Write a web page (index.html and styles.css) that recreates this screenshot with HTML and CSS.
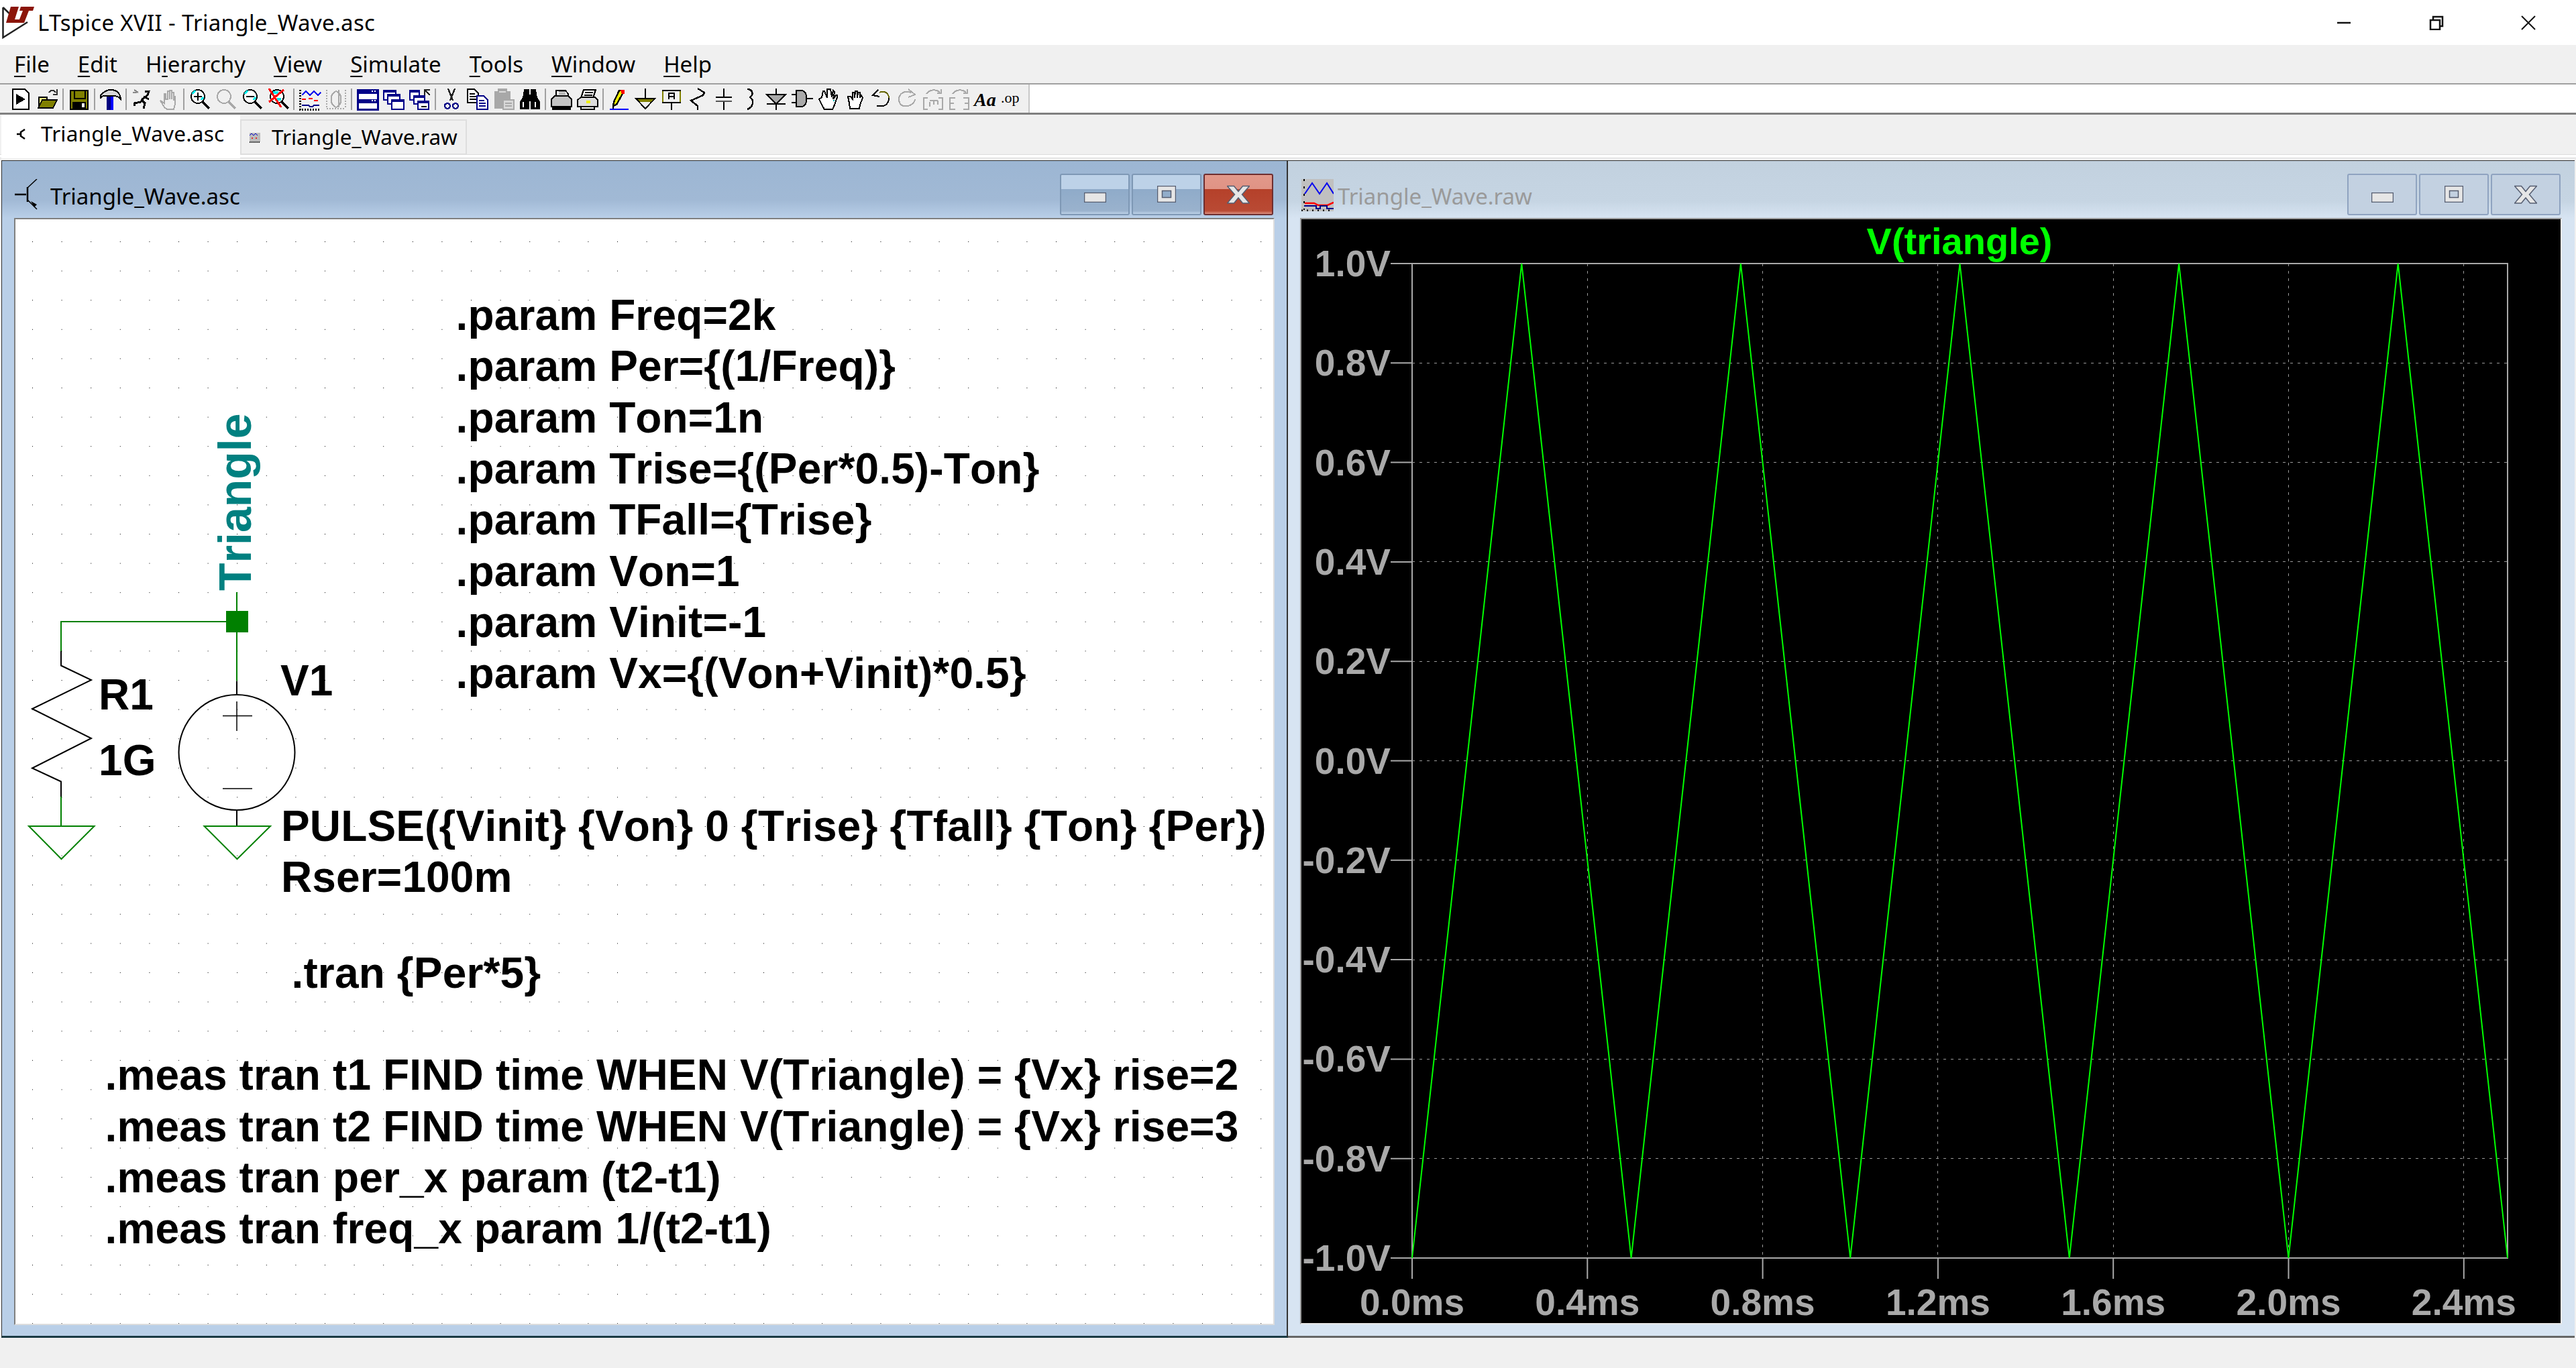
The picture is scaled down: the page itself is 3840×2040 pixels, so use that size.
FILE: index.html
```html
<!DOCTYPE html>
<html lang="en">
<head>
<meta charset="utf-8">
<title>LTspice XVII - Triangle_Wave.asc</title>
<link rel="stylesheet" href="styles.css">
</head>
<body>
<div class="app">
  <header class="titlebar">
    <svg class="logo" viewBox="0 0 48 50" width="48" height="50"><path class="logo-edge" d="M1.500 2V47L38 24M1.500 2L16 16"/><path class="logo-mark" d="M13 1h12l-6 19h10l-2 5H6zM28 1h20l-2 6h-6l-7 18h-9l7-18h-5z"/></svg>
    <span class="app-title">LTspice XVII - Triangle_Wave.asc</span>
    <div class="caption">
      <span class="cap-btn"><svg width="22" height="22" viewBox="0 0 22 22"><path d="M1 11h20" class="cap-ico"/></svg></span>
      <span class="cap-btn"><svg width="22" height="22" viewBox="0 0 22 22"><path d="M2 7h14v14H2zM6 7V2h14v14h-4" class="cap-ico"/></svg></span>
      <span class="cap-btn"><svg width="22" height="22" viewBox="0 0 22 22"><path d="M1 1l20 20M21 1L1 21" class="cap-ico thin"/></svg></span>
    </div>
  </header>

  <nav class="menubar">
    <span><u>F</u>ile</span><span><u>E</u>dit</span><span>H<u>i</u>erarchy</span><span><u>V</u>iew</span><span><u>S</u>imulate</span><span><u>T</u>ools</span><span><u>W</u>indow</span><span><u>H</u>elp</span>
  </nav>

  <div class="toolrow">
    <div class="toolbar">
      <i class="tb"><svg class="ic" viewBox="0 0 16 16"><path d="M1.500.5h9l3 3v12h-12z" fill="#fff"/><path d="M4 4l7 4-7 4z" fill="#000" stroke="none"/></svg></i>
      <i class="tb"><svg class="ic" viewBox="0 0 16 16"><path d="M1.500 14V6.500h6v2H5" fill="#ffff80"/><path d="M1 14.500l3-6h11l-3 6z" fill="#808000"/><path d="M9 3c1-2 4-2 5 0M15 .5v4h-3" stroke="#333"/></svg></i>
      <i class="sep"></i>
      <i class="tb"><svg class="ic" viewBox="0 0 16 16"><path d="M1.500 1.500h13v14h-13z" fill="#808000"/><path d="M4.500 1.500h8v6h-8z" fill="#808000"/><path d="M3 10h10v6H3z" fill="#000" stroke="none"/><path d="M10 11h2v3h-2z" fill="#fff" stroke="none"/></svg></i>
      <i class="sep"></i>
      <i class="tb"><svg class="ic" viewBox="0 0 16 16"><path d="M.5 7.500V5C3 2 5 1 8 1c4 0 7 2 7.500 7-1.500-2-3.500-2.500-5.500-2.500H3C2 5.500 1 6 .5 7.500z" fill="#d8d8d8"/><path d="M5 6h3v10H5z" fill="#000080" stroke="none"/><path d="M8 6h2v10H8z" fill="#00f" stroke="none"/></svg></i>
      <i class="sep"></i>
      <i class="tb"><svg class="ic" viewBox="0 0 16 16"><path d="M2 1l3 2M1 3h3" stroke="#888"/><path d="M10 2h3l-1 3-4 3-1 2-5 1v2M9 6l4 2M8 9l2 2-1 4" stroke-width="1.500"/></svg></i>
      <i class="tb"><svg class="ic mute" viewBox="0 0 16 16"><path d="M2 9l3 5 2 1.500h5l1-4V6h-1v3V3h-1.500v5V1.500H9V8V2H7.500v6H6V4H5v7z"/></svg></i>
      <i class="sep"></i>
      <i class="tb"><svg class="ic" viewBox="0 0 16 16"><circle cx="6.500" cy="6" r="5" fill="#fff"/><path d="M2.500 4l2-2.500M9 8.500l1.500-2" stroke="#0ee" stroke-width="1.500"/><path d="M3.500 6h6M6.500 3v6"/><path d="M10 10l5 5" stroke-width="2"/></svg></i>
      <i class="tb"><svg class="ic mute" viewBox="0 0 16 16"><circle cx="6.500" cy="6" r="5"/><path d="M10 10l5 5" stroke-width="2"/></svg></i>
      <i class="tb"><svg class="ic" viewBox="0 0 16 16"><circle cx="6.500" cy="6" r="5" fill="#fff"/><path d="M2.500 4l2-2.500M9 8.500l1.500-2" stroke="#0ee" stroke-width="1.500"/><path d="M3.500 6h6"/><path d="M10 10l5 5" stroke-width="2"/></svg></i>
      <i class="tb"><svg class="ic" viewBox="0 0 16 16"><circle cx="7" cy="6" r="5" fill="#fff"/><path d="M4 3l4 0M7 8l3 0" stroke="#0ee" stroke-width="2"/><path d="M10.500 10l5 5" stroke-width="2"/><path d="M1 0l9 14M12 1L1 10" stroke="#f00" stroke-width="1.500"/></svg></i>
      <i class="sep"></i>
      <i class="tb"><svg class="ic" viewBox="0 0 16 16"><path d="M.5 1v15M0 15.500h16" stroke-dasharray="1 1" stroke-width="1.500"/><path d="M2 5l3-3 3 3 3-3 3 3 2-2" stroke="#00e"/><path d="M2 8h3M7 7.500h3M11 9h3" stroke="#f00"/><path d="M2 12.500h5l1 1h2l1-1h4" stroke="#008" stroke-width="1.200"/></svg></i>
      <i class="tb"><svg class="ic mute" viewBox="0 0 16 16"><path d="M1 1v14h14M15 1v14" stroke-dasharray="1 1"/><path d="M8 2c-5 2-5 10 0 12M8 2c5 2 5 10 0 12M10 1v13"/></svg></i>
      <i class="sep"></i>
      <i class="tb"><svg class="ic navy" viewBox="0 0 16 16"><path d="M.5 1h15v14.500H.5z" fill="#fff" stroke-width="1.500"/><path d="M1 1h14v3H1zM1 8h14v3H1z" fill="#008" stroke="none"/><path d="M11 2h1M13 2h1M11 9h1M13 9h1" stroke="#fff"/></svg></i>
      <i class="tb"><svg class="ic navy" viewBox="0 0 16 16"><path d="M.5 1.500h9v7h-9z" fill="#fff"/><path d="M1 1h8v2H1z" fill="#008" stroke="none"/><path d="M3.500 4.500h9v7h-9z" fill="#fff"/><path d="M4 4h8v2H4z" fill="#008" stroke="none"/><path d="M6.500 8.500h9v7h-9z" fill="#fff"/><path d="M7 8h8v2H7z" fill="#008" stroke="none"/></svg></i>
      <i class="tb"><svg class="ic navy" viewBox="0 0 16 16"><path d="M.5 1.500h7v7h-7z" fill="#fff"/><path d="M1 1h6v2H1z" fill="#008" stroke="none"/><path d="M3.500 5.500h8v6h-8z" fill="#fff"/><path d="M4 5h7v2H4z" fill="#008" stroke="none"/><path d="M6.500 9.500h8v6h-8z" fill="#fff"/><path d="M7 9h7v2H7z" fill="#008" stroke="none"/><path d="M9 13.500h4" stroke="#000"/><path d="M11.500 5V1h4M11.500 1l4 4" stroke="#222"/></svg></i>
      <i class="sep"></i>
      <i class="tb"><svg class="ic" viewBox="0 0 16 16"><path d="M5.500 0l3.500 9M10.500 0L7 9" stroke="#222" stroke-width="1.200"/><circle cx="5" cy="13" r="2" stroke="#008" stroke-width="1.200"/><circle cx="11" cy="13" r="2" stroke="#008" stroke-width="1.200"/></svg></i>
      <i class="tb"><svg class="ic" viewBox="0 0 16 16"><path d="M.5.5h5l3 3v7H.5z" fill="#fff"/><path d="M2 4h4M2 6h5M2 8h5"/><path d="M7.500 5.500h5l3 3v7h-8z" fill="#fff" stroke="#008"/><path d="M9 9h4M9 11h5M9 13h5" stroke="#008"/></svg></i>
      <i class="tb"><svg class="ic mute" viewBox="0 0 16 16"><path d="M1 2h12v13H1z" fill="#a8a8a8" stroke="none"/><path d="M4 .5h6v3H4z" fill="#a8a8a8" stroke="#a8a8a8"/><path d="M4.500 2.500h5" stroke="#ddd"/><path d="M7.500 8.500h8v7h-8z" fill="#d8d8d8"/><path d="M9 11h5M9 13h5"/></svg></i>
      <i class="tb"><svg class="ic" viewBox="0 0 16 16"><path d="M4 1h3v4H9V1h3l1 6 2 3v5h-6V9H7v6H1v-5l2-3z" fill="#000"/><path d="M3 10v4M12 10v4" stroke="#fff"/></svg></i>
      <i class="sep"></i>
      <i class="tb"><svg class="ic" viewBox="0 0 16 16"><path d="M4 6V1.500h7l2 2.500v2" fill="#fff"/><path d="M6 2.500h5M6 4h5" stroke="#999"/><path d="M.5 8L3 5.500h10L15.500 8v5.500H.5z" fill="#c4c4c4"/><path d="M1 15h14" stroke-width="2"/></svg></i>
      <i class="tb"><svg class="ic" viewBox="0 0 16 16"><path d="M5 1h9l-2 6H3z" fill="#fff"/><path d="M6 3h6M5.500 5h6"/><path d="M.5 8.500L3 6.500h10.500l2 2v5h-15z" fill="#ddd"/><path d="M7 10h3" stroke="#ee0" stroke-width="2"/><path d="M3 13.500h10v2H3z" fill="#fff"/></svg></i>
      <i class="sep"></i>
      <i class="tb"><svg class="ic" viewBox="0 0 16 16"><path d="M8 1.500h2l1 1.500-5 9-2.500 1 .5-3z" fill="#ee0" stroke-width="1.200"/><path d="M9 1h3v3h-2z" fill="#f00" stroke="none"/><path d="M3 14h1" stroke="#000" stroke-width="2"/><path d="M1 15.500h14" stroke="#00f" stroke-width="1.200"/></svg></i>
      <i class="tb"><svg class="ic" viewBox="0 0 16 16"><path d="M8 0v7"/><path d="M1 7.500h14L8 15z" fill="#f0f0f0"/><path d="M2 8h12l-2 2H4z" fill="#808000" stroke="none"/></svg></i>
      <i class="tb"><svg class="ic" viewBox="0 0 16 16"><path d="M1.500 1.500h13v9h-13z" fill="#f0f0f0"/><path d="M1.500 2v8M14.500 2v8" stroke="#808000"/><path d="M6 8V3.500h4V8M6 6h4"/><path d="M8 11v5"/></svg></i>
      <i class="tb"><svg class="ic" viewBox="0 0 16 16"><path d="M8 0l5 3-1 2-9 4 5 4v3" stroke-width="1.200"/></svg></i>
      <i class="tb"><svg class="ic" viewBox="0 0 16 16"><path d="M8 0v6M8 10v6"/><path d="M2 6.500h12"/><path d="M2 9.500h12" stroke="#555"/></svg></i>
      <i class="tb"><svg class="ic" viewBox="0 0 16 16"><path d="M6 .5c4 0 5 4 2 6 3 2 3 7-2 9" stroke-width="1.200"/></svg></i>
      <i class="tb"><svg class="ic" viewBox="0 0 16 16"><path d="M8 0v5M8 11v5M1 11.500h14"/><path d="M1 4.500h14L8 11.500z" fill="#aaa"/></svg></i>
      <i class="tb"><svg class="ic" viewBox="0 0 16 16"><path d="M3.500 1.500h4c5 0 5 12 0 12h-4z" fill="#aaa"/><path d="M0 4.500h3M0 10.500h3M11 7.500h5"/></svg></i>
      <i class="tb"><svg class="ic" viewBox="0 0 16 16"><path d="M3 6.500L1 8l3 6 1 1.500h6l1-2 2.500-7V5h-1l-2 3 1-5.500-1-1-1 5-1-6H7L7 7 5 2H4z" fill="#fff"/><path d="M12 8.500v1" stroke="#0aa"/></svg></i>
      <i class="tb"><svg class="ic" viewBox="0 0 16 16"><path d="M3 6l1 5 .5 4h7l.5-3 2-5-1-2-1 2V3h-1.500L10 7V2H8.500L8 7V3H6.500v5L5 6z" fill="#fff"/></svg></i>
      <i class="tb"><svg class="ic" viewBox="0 0 16 16"><path d="M7 3c4-2 7 1 7 4" stroke="#660"/><path d="M14 7c0 4-3 7-7 6M5 13h3"/><path d="M6 1L2 5l5 1"/></svg></i>
      <i class="tb"><svg class="ic mute" viewBox="0 0 16 16"><path d="M11 3C6 1 2 4 2 8s3 6 7 5c3-1 5-3 5-5"/><path d="M9 .5l5 4-5 2"/></svg></i>
      <i class="tb"><svg class="ic mute" viewBox="0 0 16 16"><path d="M4 7H1v8.500h3M12 7h3v8.500h-3" stroke-width="1.200"/><path d="M5.500 10v3.500M5.500 9h6M8.500 9v3M11.500 9v3"/><path d="M3 4C5 1 10 0 13 3M14 .5v3h-3"/></svg></i>
      <i class="tb"><svg class="ic mute" viewBox="0 0 16 16"><path d="M5 7H1v8.500h4M11 7h4v8.500h-4M1 11h3M12 11h3" stroke-width="1.200"/><path d="M3 4C5 1 10 0 13 3M14 .5v3h-3"/></svg></i>
      <i class="tb"><svg class="ic" viewBox="0 0 16 16"><text x="-.5" y="13" class="ic-aa">Aa</text></svg></i>
      <i class="tb"><svg class="ic" viewBox="0 0 16 16"><text x="0" y="10.500" class="ic-op">.op</text></svg></i>
    </div>
  </div>

  <div class="tabs">
    <div class="tab active">
      <svg class="tab-ico" viewBox="0 0 16 16" width="16" height="16"><path d="M1 8h6M7 4v8M7 5l6-4M7 11l6 4" class="sym"/></svg>
      <span>Triangle_Wave.asc</span>
    </div>
    <div class="tab">
      <svg class="tab-ico" viewBox="0 0 16 16" width="16" height="16"><path d="M0 1h16v14H0z" fill="#bbb"/><path d="M0 5l3-3 3 3 3-3 3 3" fill="none" stroke="#00c" stroke-width="1"/><path d="M3 9h2M9 9h2" stroke="#e00" stroke-width="1.500"/><path d="M0 15h16" stroke="#000" stroke-width="2" stroke-dasharray="1 1"/></svg>
      <span>Triangle_Wave.raw</span>
    </div>
  </div>

  <main class="mdi">
    <section class="win win-active">
      <div class="win-head">
        <svg class="win-ico" viewBox="0 0 34 46" width="34" height="46"><path d="M0 23h17M19 12v22" class="sym"/><path d="M19 13L33 0M19 31l14 14" class="sym thin"/><path d="M24 33l5 9 4-4z" fill="#000"/></svg>
        <span class="win-title">Triangle_Wave.asc</span>
        <div class="win-btns">
          <span class="wbtn"><svg class="g-min" viewBox="0 0 33 15" width="33" height="15"><rect x=".5" y=".5" width="32" height="14" class="glyph"/></svg></span>
          <span class="wbtn"><svg class="g-max" viewBox="0 0 28 25" width="28" height="25"><path d="M.5.500h27v24H.5zM7.500 7.500h13v10h-13z" class="glyph hole"/></svg></span>
          <span class="wbtn close"><svg class="g-x" viewBox="0 0 34 28" width="34" height="28"><path d="M.5 1.500h10l6.500 8 6.500-8h10l-11 12.500 11 13h-10l-6.500-8-6.500 8H.5l11-13z" class="glyph"/></svg></span>
        </div>
      </div>
      <div class="client sheet">
        <svg class="canvas" viewBox="21 325 1880 1651" width="1880" height="1651">
          <defs>
            <pattern id="dots" x="48" y="360" width="43.6" height="43.6" patternUnits="userSpaceOnUse"><rect x="0" y="0" width="1" height="1" fill="#000"/></pattern>
          </defs>
          <rect x="21" y="325" width="1880" height="1651" fill="url(#dots)"/>
          <path class="wire" d="M353 883V1015.500M91 971V927H353"/>
          <path class="part" d="M353 1015.500V1036M91 971V992.500L136 1014L48 1057L136 1101L48 1145.500L91 1165.500V1188M353 1208V1232"/>
          <path class="wire" d="M91 1188V1232M43 1232H140.500L91.500 1281ZM304.500 1232H403L353.500 1281Z"/>
          <rect class="junction" x="337" y="911" width="33" height="32"/>
          <ellipse class="part" cx="353" cy="1122" rx="86.500" ry="86"/>
          <path class="part thin-line" d="M332 1067.500H376M353 1046V1090M332 1176H376"/>
          <text class="sch" x="147" y="1058">R1</text>
          <text class="sch" x="147" y="1156">1G</text>
          <text class="sch" x="418" y="1037">V1</text>
          <text class="net" transform="translate(374 881) rotate(-90)">Triangle</text>
          <text class="sch" x="679.500" y="492">.param Freq=2k</text>
          <text class="sch" x="679.500" y="568.300">.param Per={(1/Freq)}</text>
          <text class="sch" x="679.500" y="644.700">.param Ton=1n</text>
          <text class="sch" x="679.500" y="721">.param Trise={(Per*0.5)-Ton}</text>
          <text class="sch" x="679.500" y="797.300">.param TFall={Trise}</text>
          <text class="sch" x="679.500" y="873.600">.param Von=1</text>
          <text class="sch" x="679.500" y="950">.param Vinit=-1</text>
          <text class="sch" x="679.500" y="1026.200">.param Vx={(Von+Vinit)*0.5}</text>
          <text class="sch" x="419" y="1254">PULSE({Vinit} {Von} 0 {Trise} {Tfall} {Ton} {Per})</text>
          <text class="sch" x="419" y="1330">Rser=100m</text>
          <text class="sch" x="434.500" y="1472.700">.tran {Per*5}</text>
          <text class="sch" x="156.500" y="1625">.meas tran t1 FIND time WHEN V(Triangle) = {Vx} rise=2</text>
          <text class="sch" x="156.500" y="1701.700">.meas tran t2 FIND time WHEN V(Triangle) = {Vx} rise=3</text>
          <text class="sch" x="156.500" y="1778">.meas tran per_x param (t2-t1)</text>
          <text class="sch" x="156.500" y="1854.300">.meas tran freq_x param 1/(t2-t1)</text>
        </svg>
      </div>
    </section>

    <section class="win win-idle">
      <div class="win-head">
        <svg class="win-ico plot-ico" viewBox="0 0 48 48" width="48" height="48"><path d="M0 0h48v48H0z" fill="#c0c0c0"/><path d="M5 22L16 6l11 16L38 6l10 16" fill="none" stroke="#00e" stroke-width="2"/><path d="M5 36h14l6 3h14l9-4" fill="none" stroke="#f00" stroke-width="2.500"/><path d="M4 0v46" stroke="#000" stroke-width="2" stroke-dasharray="3 8"/><path d="M0 47h48" stroke="#000" stroke-width="3" stroke-dasharray="2 6"/><path d="M4 40h18v4h6v-4h10v4h10" fill="none" stroke="#008" stroke-width="2"/></svg>
        <span class="win-title">Triangle_Wave.raw</span>
        <div class="win-btns">
          <span class="wbtn"><svg class="g-min" viewBox="0 0 33 15" width="33" height="15"><rect x=".5" y=".5" width="32" height="14" class="glyph"/></svg></span>
          <span class="wbtn"><svg class="g-max" viewBox="0 0 28 25" width="28" height="25"><path d="M.5.500h27v24H.5zM7.500 7.500h13v10h-13z" class="glyph hole"/></svg></span>
          <span class="wbtn"><svg class="g-x" viewBox="0 0 34 28" width="34" height="28"><path d="M.5 1.500h10l6.500 8 6.500-8h10l-11 12.500 11 13h-10l-6.500-8-6.500 8H.5l11-13z" class="glyph"/></svg></span>
        </div>
      </div>
      <div class="client scope">
        <svg class="canvas" viewBox="1939 325 1879 1651" width="1879" height="1651">
          <path class="grid" d="M2367.300 393V1876M2628.600 393V1876M2889.900 393V1876M3151.200 393V1876M3412.500 393V1876M3673.800 393V1876M2106 541.300H3739M2106 689.600H3739M2106 837.900H3739M2106 986.200H3739M2106 1134.500H3739M2106 1282.800H3739M2106 1431.100H3739M2106 1579.400H3739M2106 1727.700H3739"/>
          <rect class="frame" x="2106" y="393" width="1633" height="1483"/>
          <path class="tick" d="M2074 393H2106M2074 541.300H2106M2074 689.600H2106M2074 837.900H2106M2074 986.200H2106M2074 1134.500H2106M2074 1282.800H2106M2074 1431.100H2106M2074 1579.400H2106M2074 1727.700H2106M2074 1876H2106M2106 1876V1907M2367.300 1876V1907M2628.600 1876V1907M2889.900 1876V1907M3151.200 1876V1907M3412.500 1876V1907M3673.800 1876V1907"/>
          <polyline class="trace" points="2106,1876 2269.300,393 2432.600,1876 2595.900,393 2759.200,1876 2922.500,393 3085.800,1876 3249.100,393 3412.400,1876 3575.700,393 3739,1876"/>
          <text class="trace-name" x="2922" y="379">V(triangle)</text>
          <text class="yl" x="2074" y="412">1.0V</text>
          <text class="yl" x="2074" y="560.300">0.8V</text>
          <text class="yl" x="2074" y="708.600">0.6V</text>
          <text class="yl" x="2074" y="856.900">0.4V</text>
          <text class="yl" x="2074" y="1005.200">0.2V</text>
          <text class="yl" x="2074" y="1153.500">0.0V</text>
          <text class="yl" x="2074" y="1301.800">-0.2V</text>
          <text class="yl" x="2074" y="1450.100">-0.4V</text>
          <text class="yl" x="2074" y="1598.400">-0.6V</text>
          <text class="yl" x="2074" y="1746.700">-0.8V</text>
          <text class="yl" x="2074" y="1895">-1.0V</text>
          <text class="xl" x="2106" y="1960.500">0.0ms</text>
          <text class="xl" x="2367.300" y="1960.500">0.4ms</text>
          <text class="xl" x="2628.600" y="1960.500">0.8ms</text>
          <text class="xl" x="2889.900" y="1960.500">1.2ms</text>
          <text class="xl" x="3151.200" y="1960.500">1.6ms</text>
          <text class="xl" x="3412.500" y="1960.500">2.0ms</text>
          <text class="xl" x="3673.800" y="1960.500">2.4ms</text>
        </svg>
      </div>
    </section>
  </main>
</div>
</body>
</html>
```

FILE: styles.css
```css
html, body { margin: 0; padding: 0; }
body { background: #f0f0f0; font-family: "Noto Sans", "Liberation Sans", sans-serif; color: #000; }
.app { width: 3840px; height: 2040px; overflow: hidden; display: flex; flex-direction: column; background: #f0f0f0; }

.titlebar { height: 67px; flex: none; background: #fff; display: flex; align-items: center; padding-left: 3px; box-sizing: border-box; }
.logo { flex: none; }
.logo-edge { fill: none; stroke: #222; stroke-width: 2.500; }
.logo-mark { fill: #8b1509; }
.app-title { margin-left: 5px; font-size: 33px; line-height: 1; letter-spacing: .33px; }
.caption { margin-left: auto; display: flex; padding-right: 2px; }
.cap-btn { width: 137.500px; height: 67px; display: flex; align-items: center; justify-content: center; }
.cap-ico { fill: none; stroke: #111; stroke-width: 2.500; }
.cap-ico.thin { stroke-width: 2; }

.menubar { height: 59px; flex: none; box-sizing: border-box; background: #f0f0f0; border-bottom: 2px solid #a0a0a0; display: flex; gap: 42px; align-items: center; padding-left: 21px; font-size: 33px; line-height: 1; }
.menubar u { text-underline-offset: 5px; text-decoration-thickness: 2px; }

.toolrow { height: 45px; flex: none; box-sizing: border-box; background: #fff; border-bottom: 3px solid #808080; }
.toolbar { width: 1535px; height: 42px; box-sizing: border-box; background: #f0f0f0; border-right: 2px solid #c8c8c8; display: flex; align-items: center; padding: 2px 0 0 12.500px; }
.tb { width: 39px; flex: none; display: flex; justify-content: center; font-style: normal; }
.sep { width: 2px; height: 32px; flex: none; margin: 0 3.500px 0 2.500px; background: #a0a0a0; }
.ic { width: 32px; height: 32px; fill: none; stroke: #000; stroke-width: 1; overflow: visible; shape-rendering: crispEdges; }
.ic.mute { stroke: #a8a8a8; }
.ic.navy { stroke: #008; }
.ic-aa { font-family: "Liberation Serif", serif; font-weight: 700; font-style: italic; font-size: 14px; fill: #000; stroke: none; }
.ic-op { font-family: "Liberation Serif", serif; font-size: 11px; fill: #000; stroke: none; }

.tabs { height: 65px; flex: none; display: flex; align-items: flex-start; background: linear-gradient(#f0f0f0 59px, #dcdcdc 59px 60px, #fff 60px 64px, #dcdcdc 64px); font-size: 31.500px; line-height: 1; }
.tab { box-sizing: border-box; display: flex; align-items: center; width: 338px; height: 53px; margin-top: 7px; padding-left: 12px; gap: 17px; background: #f0f0f0; border: 2px solid #dedede; }
.tab span { position: relative; top: -1px; }
.tab.active { width: 356px; height: 65px; margin: 0 0 0 2px; padding-left: 22px; gap: 21px; background: #fff; border: 0; padding-bottom: 8px; letter-spacing: .2px; }
.tab-ico { flex: none; }
.sym { fill: none; stroke: #000; stroke-width: 2.500; }
.sym.thin { stroke-width: 1.500; }

.mdi { margin-top: 3px; height: 1756px; flex: none; display: flex; padding-left: 2px; padding-right: 3px; }
.win { box-sizing: border-box; height: 1756px; display: flex; flex-direction: column; border: 1px solid #333; }
.win-active { width: 1918px; flex: none; background: #b9cfe8; border-bottom: 3px solid #1a3a44; border-right-width: 2px; padding: 0 18px 16px 18px; }
.win-idle { flex: 1; background: #d7e4f2; border-left: 0; border-bottom: 3px solid #666; border-right: 0; padding: 0 19px 17px 18px; }
.win-head { height: 85px; flex: none; display: flex; align-items: flex-start; margin: 0 -18px; padding: 0 1px; }
.win-active .win-head { background: linear-gradient(#9cb6d3 0, #a1b9d5 68%, #b9cfe8 100%); padding-left: 19px; }
.win-idle .win-head { background: linear-gradient(#c2d1df 0, #c6d5e3 70%, #d7e4f2 100%); margin-right: -19px; padding-left: 20px; }
.win-ico { flex: none; margin-top: 27px; }
.win-title { font-size: 33px; line-height: 1; margin-left: 19px; margin-top: 36px; }
.win-idle .win-title { color: #9a9a9a; margin-left: 6px; }
.win-btns { margin-left: auto; margin-top: 19px; display: flex; gap: 3px; }
.win-active .win-btns { margin-right: 19px; }
.win-idle .win-btns { margin-right: 20px; }
.wbtn { box-sizing: border-box; width: 104px; height: 62px; border-radius: 3px; display: flex; justify-content: center; align-items: flex-start; }
.win-active .wbtn { border: 2px solid #7e98b5; background: linear-gradient(#bdd2e8 0, #bdd2e8 37%, #8fabc9 37%, #9ab2cd 92%, #bdd2e8 100%); }
.win-active .wbtn.close { border-color: #6e2e30; background: linear-gradient(#e2988a 0, #e09385 37%, #b5412a 37%, #b94a34 92%, #dd9080 100%); }
.win-idle .wbtn { border: 2px solid #8fa3c0; background: #c3d1e1; }
.g-min { margin-top: 26px; }
.g-max { margin-top: 16px; }
.g-x { margin-top: 15px; }
.glyph { fill: #e6e6e6; stroke: #555d70; stroke-width: 1.500; }
.glyph.hole { fill-rule: evenodd; }

.client { flex: 1; min-height: 0; box-sizing: border-box; overflow: hidden; }
.sheet { background: #fff; border-top: 2px solid #808080; border-left: 2px solid #808080; border-bottom: 2px solid #ddd; border-right: 2px solid #ddd; }
.scope { background: #000; border-top: 2px solid #999; border-left: 2px solid #999; border-bottom: 2px solid #e8e8e8; border-right: 2px solid #e8e8e8; }
.canvas { display: block; margin: -2px 0 0 -2px; }

.wire { fill: none; stroke: #008000; stroke-width: 2; }
.part { fill: none; stroke: #000; stroke-width: 2; }
.thin-line { stroke-width: 1.500; }
.junction { fill: #008000; }
.sch, .net, .trace-name, .yl, .xl { font-family: "Liberation Sans", Arial, sans-serif; font-weight: 700; font-kerning: none; }
.sch { font-size: 64px; fill: #000; letter-spacing: .14px; }
.net { font-size: 68px; fill: #008080; }

.grid { fill: none; stroke: #999; stroke-width: 1; stroke-dasharray: 4 7; shape-rendering: crispEdges; }
.frame { fill: none; stroke: #a9a9a9; stroke-width: 2; }
.tick { fill: none; stroke: #a9a9a9; stroke-width: 2; }
.trace { fill: none; stroke: #00ff00; stroke-width: 2; }
.yl, .xl { font-size: 55px; }
.trace-name { font-size: 56px; fill: #00ff00; text-anchor: middle; }
.yl { fill: #a9a9a9; text-anchor: end; }
.xl { fill: #a9a9a9; text-anchor: middle; }
```
